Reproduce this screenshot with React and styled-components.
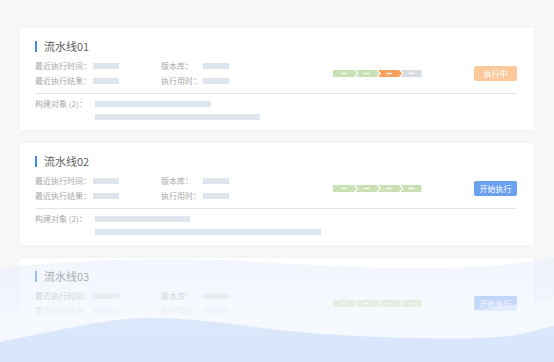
import React from "react";
import styled, { createGlobalStyle } from "styled-components";

const Global = createGlobalStyle`
  html, body { margin: 0; padding: 0; background: #f7f7f7; }
  body { font-family: "Noto Sans CJK SC", "Noto Sans", sans-serif; }
  #root { width: 554px; height: 362px; overflow: hidden; }
`;

const Page = styled.div`
  position: relative;
  width: 554px;
  height: 362px;
  box-sizing: border-box;
  padding: 28px 20px 0 20px;
  display: flex;
  flex-direction: column;
  gap: 13px;
  background: #f7f7f7;
  overflow: hidden;
`;

const Card = styled.div`
  background: #fff;
  box-shadow: 0 0 3px rgba(0, 0, 0, 0.04);
  padding: 11px 17px 10px 15px;
  flex-shrink: 0;
`;

const Title = styled.div`
  display: flex;
  align-items: center;
  gap: 7px;
  height: 14px;
  font-size: 11px;
  color: #5e5e5e;
  line-height: 14px;
  &::before {
    content: "";
    width: 2px;
    height: 11px;
    background: #3f8de0;
  }
`;

const Body = styled.div`
  display: flex;
  align-items: center;
  margin-top: 5px;
  padding-bottom: 5px;
  border-bottom: 1px solid #e6e6e6;
`;

const InfoGrid = styled.div`
  display: grid;
  grid-template-columns: 126px 100px;
  grid-auto-rows: 15px;
  align-items: center;
`;

const Info = styled.div`
  display: flex;
  align-items: center;
  font-size: 8px;
  color: #a8a8a8;
  white-space: nowrap;
`;

const Label = styled.span`
  width: ${(p) => p.$w}px;
  flex-shrink: 0;
`;

const Bar = styled.span`
  display: block;
  width: ${(p) => p.$w}px;
  height: 6px;
  background: #dfe5ec;
`;

const PipeWrap = styled.div`
  margin-left: 72px;
  display: flex;
  align-items: center;
`;

const Button = styled.div`
  margin-left: auto;
  width: 43px;
  height: 15px;
  border-radius: 2px;
  background: ${(p) => p.$bg};
  color: #fff;
  font-size: 8px;
  line-height: 15px;
  text-align: center;
`;

const Build = styled.div`
  display: flex;
  padding-top: 4px;
`;

const BuildLabel = styled.div`
  width: 60px;
  font-size: 8px;
  color: #a8a8a8;
  line-height: 12px;
  white-space: nowrap;
`;

const BuildBars = styled.div`
  display: flex;
  flex-direction: column;
  gap: 7px;
  padding-top: 3px;
`;

const Overlay = styled.div`
  position: absolute;
  left: 0;
  bottom: 0;
  width: 554px;
  height: 112px;
  pointer-events: none;
`;

function Pipeline({ colors }) {
  const w = 22.5;
  return (
    <svg width="91" height="7" viewBox="0 0 91 7">
      {colors.map((c, i) => {
        const x = i * w;
        const first = i === 0;
        const last = i === colors.length - 1;
        const d = `M${x} 0 L${x + w - 1.5} 0 L${x + w + (last ? -1.5 : 1.5)} 3.5 L${x + w - 1.5} 7 L${x} 7 ${first ? "" : `L${x + 3} 3.5`} Z`;
        return (
          <g key={i}>
            <path d={d} fill={c} />
            <rect x={x + 8} y={2.8} width={6} height={1.4} fill="#fff" opacity="0.85" />
          </g>
        );
      })}
    </svg>
  );
}

const pipelines = [
  {
    name: "流水线01",
    colors: ["#c9e1b5", "#c9e1b5", "#f6a15e", "#d8dce1"],
    btn: "执行中",
    btnBg: "#fcc89c",
    bars: [116, 165],
  },
  {
    name: "流水线02",
    colors: ["#c9e1b5", "#c9e1b5", "#c9e1b5", "#c9e1b5"],
    btn: "开始执行",
    btnBg: "#6aa0f0",
    bars: [95, 226],
  },
  {
    name: "流水线03",
    colors: ["#cfe4b8", "#cfe4b8", "#cfe4b8", "#cfe4b8"],
    btn: "开始执行",
    btnBg: "#7eacf3",
    bars: [110, 180],
  },
];

function PipelineCard({ p }) {
  return (
    <Card>
      <Title>{p.name}</Title>
      <Body>
        <InfoGrid>
          <Info>
            <Label $w={58}>最近执行时间：</Label>
            <Bar $w={26} />
          </Info>
          <Info>
            <Label $w={42}>版本库：</Label>
            <Bar $w={26} />
          </Info>
          <Info>
            <Label $w={58}>最近执行结果：</Label>
            <Bar $w={26} />
          </Info>
          <Info>
            <Label $w={42}>执行用时：</Label>
            <Bar $w={26} />
          </Info>
        </InfoGrid>
        <PipeWrap>
          <Pipeline colors={p.colors} />
        </PipeWrap>
        <Button $bg={p.btnBg}>{p.btn}</Button>
      </Body>
      <Build>
        <BuildLabel>构建对象 (2)：</BuildLabel>
        <BuildBars>
          <Bar $w={p.bars[0]} />
          <Bar $w={p.bars[1]} />
        </BuildBars>
      </Build>
    </Card>
  );
}

function Waves() {
  return (
    <svg width="554" height="112" viewBox="0 0 554 112" preserveAspectRatio="none">
      <defs>
        <linearGradient id="fade" x1="0" y1="0" x2="0" y2="1">
          <stop offset="0" stopColor="#ffffff" stopOpacity="0" />
          <stop offset="0.3" stopColor="#fbfcff" stopOpacity="0.08" />
          <stop offset="0.5" stopColor="#f8faff" stopOpacity="0.3" />
          <stop offset="0.65" stopColor="#f6f9fe" stopOpacity="0.6" />
          <stop offset="0.8" stopColor="#f3f7fe" stopOpacity="0.85" />
          <stop offset="1" stopColor="#eef4fd" stopOpacity="1" />
        </linearGradient>
        <linearGradient id="back" x1="0" y1="0" x2="0" y2="1">
          <stop offset="0" stopColor="#e4ecfa" stopOpacity="0.5" />
          <stop offset="1" stopColor="#eef3fc" stopOpacity="0.45" />
        </linearGradient>
        <linearGradient id="front" x1="0" y1="0" x2="0" y2="1">
          <stop offset="0" stopColor="#dde8fb" />
          <stop offset="1" stopColor="#d7e4fb" />
        </linearGradient>
      </defs>
      <path d="M0 18 C 80 10, 160 6, 260 12 S 460 24, 554 8 L554 112 L0 112 Z" fill="url(#back)" />
      <rect x="0" y="0" width="554" height="112" fill="url(#fade)" />
      <path d="M0 64 C 60 54, 130 48, 200 54 S 330 74, 420 66 S 520 52, 554 48 L554 112 L0 112 Z" fill="#f6f9fe" opacity="0.55" />
      <path d="M0 92 C 50 82, 100 70, 140 68 S 230 74, 280 80 S 430 90, 480 88 S 530 80, 554 76 L554 112 L0 112 Z" fill="url(#front)" />
    </svg>
  );
}

export default function App() {
  return (
    <>
      <Global />
      <Page>
        {pipelines.map((p) => (
          <PipelineCard key={p.name} p={p} />
        ))}
        <Overlay>
          <Waves />
        </Overlay>
      </Page>
    </>
  );
}
